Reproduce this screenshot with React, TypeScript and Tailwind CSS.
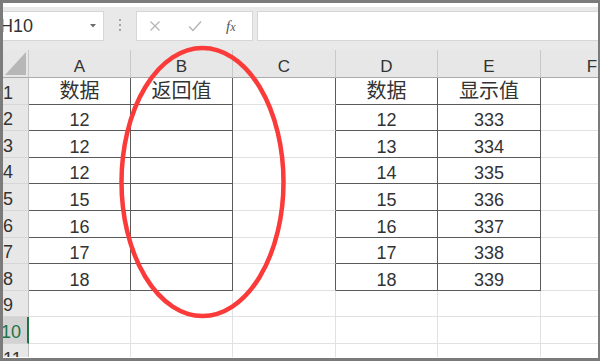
import { ReactNode } from 'react';

const colW = ['w-[26px]', 'w-[102px]', 'w-[102px]', 'w-[103px]', 'w-[102px]', 'w-[103px]', 'w-[103px]'];
const rowH = ['h-[27px]', 'h-[26px]', 'h-[27px]', 'h-[26px]', 'h-[27px]', 'h-[27px]', 'h-[26px]', 'h-[27px]', 'h-[26px]', 'h-[27px]', 'h-[27px]'];
const letters = ['A', 'B', 'C', 'D', 'E', 'F'];

// cell contents, row 1..8 ; columns 1..6 (A..F)
const cells: Record<string, string> = {
  '1-1': '数据',
  '1-2': '返回值',
  '1-4': '数据',
  '1-5': '显示值',
};
const colA = [12, 12, 12, 15, 16, 17, 18];
const colD = [12, 13, 14, 15, 16, 17, 18];
colA.forEach((v, i) => {
  cells[`${i + 2}-1`] = String(v);
  cells[`${i + 2}-4`] = String(v);
});
colD.forEach((v, i) => {
  cells[`${i + 2}-4`] = String(v);
  cells[`${i + 2}-5`] = String(333 + i);
});

const inTable = (r: number, c: number) => r >= 1 && r <= 8 && (c === 1 || c === 2 || c === 4 || c === 5);
const isCjk = (s: string) => /[^\x00-\x7f]/.test(s);

function Cell({ r, c }: { r: number; c: number }) {
  const v = cells[`${r}-${c}`] ?? '';
  const right = inTable(r, c) || inTable(r, c + 1) ? 'border-r-[#5a5a5a]' : 'border-r-[#e1e1e1]';
  const bottom = inTable(r, c) || inTable(r + 1, c) ? 'border-b-[#5a5a5a]' : 'border-b-[#e1e1e1]';
  const cjk = isCjk(v);
  return (
    <div
      className={`${colW[c]} shrink-0 border-r border-b ${right} ${bottom} bg-white flex justify-center ${
        cjk ? 'items-center text-[20px]' : 'items-end text-[18px]'
      } leading-[20px] text-[#333]`}
    >
      {v}
    </div>
  );
}

function RowHead({ r }: { r: number }) {
  const selected = r === 10;
  return (
    <div
      className={`${colW[0]} shrink-0 border-b border-b-[#d6d6d6] flex items-end pb-[1px] text-[18px] leading-[20px] ${
        selected
          ? 'bg-[#d3d3d3] text-[#217346] border-r-2 border-r-[#217346]'
          : 'bg-[#e7e7e7] text-[#333] border-r border-r-[#bdbdbd]'
      }`}
    >
      <span className={selected ? '-ml-[2px]' : ''}>{r}</span>
    </div>
  );
}

function Box({ className, children }: { className: string; children?: ReactNode }) {
  return <div className={`h-[30px] bg-white border border-[#d6d6d6] ${className}`}>{children}</div>;
}

export default function App() {
  const rows = Array.from({ length: 11 }, (_, i) => i + 1);
  return (
    <div className="relative w-[600px] h-[361px] overflow-hidden bg-white border-t-[3px] border-l-[3px] border-r-[2px] border-b-[3px] border-[#7b7b7b] flex flex-col font-['Liberation_Sans','Noto_Sans_CJK_SC',sans-serif]">
      {/* Formula bar */}
      <div className="h-[47px] shrink-0 bg-[#e9e9e9] border-t-4 border-white flex items-start pt-[4px]">
        <Box className="w-[101px] border-l-0 flex items-center justify-between pr-[7px]">
          <span className="-ml-[3px] text-[18px] leading-[20px] text-[#333]">H10</span>
          <svg width="6" height="4" viewBox="0 0 6 4">
            <path d="M0 0H6L3 3.5Z" fill="#6b6b6b" />
          </svg>
        </Box>
        <div className="ml-[15px] mt-[8px] flex flex-col gap-[3px]">
          <span className="w-[2px] h-[2px] bg-[#a5a5a5]" />
          <span className="w-[2px] h-[2px] bg-[#a5a5a5]" />
          <span className="w-[2px] h-[2px] bg-[#a5a5a5]" />
        </div>
        <Box className="ml-[15px] w-[117px] flex items-center">
          <svg className="ml-[12px]" width="12" height="12" viewBox="0 0 12 12">
            <path d="M1.5 1.5L10.5 10.5M10.5 1.5L1.5 10.5" stroke="#b5b5b5" strokeWidth="1.3" />
          </svg>
          <svg className="ml-[27px]" width="14" height="12" viewBox="0 0 14 12">
            <path d="M1 6.5L5 10.5L13 1.5" fill="none" stroke="#b5b5b5" strokeWidth="1.4" />
          </svg>
          <span className="ml-[24px] font-['Liberation_Serif',serif] italic text-[15px] leading-[16px] text-[#555]">
            f<span className="text-[12px]">x</span>
          </span>
        </Box>
        <Box className="ml-[4px] flex-1 border-r-0" />
      </div>

      {/* Grid */}
      <div className="h-[307px] shrink-0 overflow-hidden bg-white">
        <div className="flex h-[28px]">
          <div className={`${colW[0]} shrink-0 bg-[#e7e7e7] border-r border-b border-r-[#c9c9c9] border-b-[#ababab] flex items-end justify-end pr-[2px] pb-[2px]`}>
            <svg width="21" height="23" viewBox="0 0 21 23">
              <path d="M21 0V23H0Z" fill="#b7b7b7" />
            </svg>
          </div>
          {letters.map((l, i) => (
            <div
              key={l}
              className={`${colW[i + 1]} shrink-0 bg-[#e7e7e7] border-r border-b border-r-[#c9c9c9] border-b-[#ababab] flex items-end justify-center text-[17px] leading-[20px] text-[#333]`}
            >
              {l}
            </div>
          ))}
        </div>
        {rows.map((r) => (
          <div key={r} className={`flex ${rowH[r - 1]}`}>
            <RowHead r={r} />
            {letters.map((_, i) => (
              <Cell key={i} r={r} c={i + 1} />
            ))}
          </div>
        ))}
      </div>

      {/* Red mark */}
      <svg className="absolute left-[-3px] top-[-3px] pointer-events-none" width="600" height="361" viewBox="0 0 600 361">
        <ellipse cx="202.5" cy="182" rx="81" ry="134" fill="none" stroke="#fb3a3a" strokeWidth="4.5" />
      </svg>
    </div>
  );
}
